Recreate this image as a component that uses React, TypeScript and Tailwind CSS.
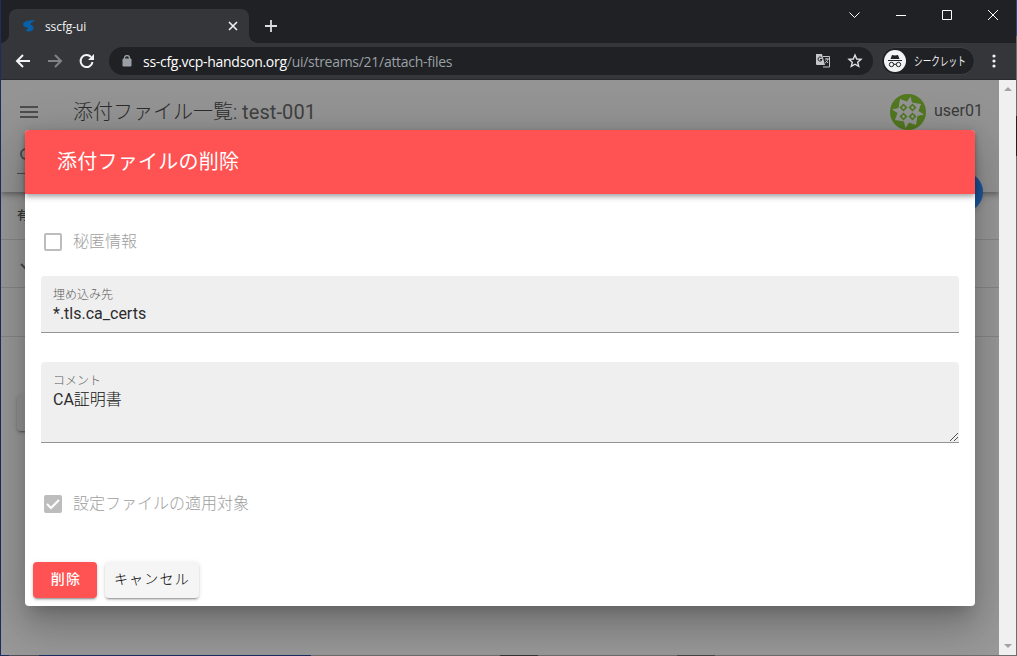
import React from "react";

const Chrome = () => (
  <>
    <div className="flex h-[43px] bg-[#202124] pl-[8px] pt-[9px]">
      <div className="relative flex h-[34px] w-[240px] shrink-0 items-center rounded-t-[8px] bg-[#35363a] pl-[14px] pr-[10px]">
        <span className="absolute -left-[8px] bottom-0 h-2 w-2 bg-[radial-gradient(circle_at_0_0,#202124_7.5px,#35363a_8px)]" />
        <span className="absolute -right-[8px] bottom-0 h-2 w-2 bg-[radial-gradient(circle_at_100%_0,#202124_7.5px,#35363a_8px)]" />
        <svg width="12" height="12" viewBox="0 0 12 12" fill="#0860a8">
          <path d="M12 .5C8-.3 2 .3.3 3.300-.7 6.500 2 7.300 4 7.600 5.500 8 5 9.500 2.500 9.900 5 12.800 10.300 11.500 10.500 8 10.700 5.300 8.300 5.400 7.600 4.500 7 3 9.500 2.200 12 .5Z" />
        </svg>
        <span className="ml-[10px] mt-[2px] flex-1 text-[12px] leading-4 text-[#f1f3f4]"><span className="tracking-[-0.1px]">sscfg-ui</span></span>
        <svg width="12" height="12" viewBox="0 0 12 12" stroke="#f1f3f4" strokeWidth="1.6"><path d="m2 2 8 8M10 2l-8 8" /></svg>
      </div>
      <svg className="ml-[15px] mt-[10px]" width="14" height="14" stroke="#dcdde0" strokeWidth="1.8"><path d="M7 1v12M1 7h12" /></svg>
      <svg className="ml-auto mt-[-2px]" width="167" height="18" fill="none" stroke="#fff" strokeWidth="1">
        <path d="m.5 5.500 5 5 5-5M47 8.500h10M93.500 3.500h9v9h-9zM139 3l10 10M149 3l-10 10" />
      </svg>
    </div>
    <div className="flex h-[37px] items-center border-b border-[#292a2d] bg-[#35363a] pl-[14px] pr-[14px]">
      <svg width="84" height="18" viewBox="0 0 84 18" fill="none" strokeWidth="2">
        <path d="M15 9H2M8 3 2 9l6 6" stroke="#f1f3f4" />
        <path d="M33 9h13M40 3l6 6-6 6" stroke="#818286" />
        <path d="M76 5A6 6 0 1 0 77.500 10" stroke="#f1f3f4" />
        <path d="M79 2v6h-6Z" fill="#f1f3f4" />
      </svg>
      <div className="ml-[10px] flex h-[28px] w-[764px] items-center rounded-full bg-[#202124] pl-[13px] pr-[10px]">
        <svg width="10" height="12" viewBox="0 0 10 12"><path d="M1 4h8v7H1z" fill="#9aa0a6" stroke="#9aa0a6" strokeLinejoin="round" /><path d="M2.500 5V3a2.500 2.500 0 0 1 5 0v2" fill="none" stroke="#9aa0a6" strokeWidth="1.300" /></svg>
        <span className="ml-[11px] mt-[1px] flex-1 whitespace-nowrap text-[14px] leading-5 tracking-[-0.280px] text-[#9aa0a6]"><span className="text-white">ss-cfg.vcp-handson.org</span>/ui/streams/21/attach-files</span>
        <svg width="16" height="16" viewBox="0 0 16 16">
          <path d="M1 1h6l3 11H2a1 1 0 0 1-1-1Z" fill="#c4c6c9" />
          <path d="M8 3.500h6.500v10.500H8M10 6h4M12 5v1M13 6c-.5 2-2 3.500-3 4M10.500 7.500 13 10" fill="none" stroke="#c4c6c9" />
          <path d="M6.500 4.700A2 2 0 1 0 7 6.500H5" fill="none" stroke="#202124" />
        </svg>
        <svg className="ml-[16px]" width="16" height="16" viewBox="0 0 16 16" fill="none" stroke="#dfe1e5" strokeWidth="1.400"><path d="m8 2 1.700 4 4.300.4-3.300 2.800 1 4.200L8 11.200l-3.700 2.200 1-4.200L2 6.400 6.300 6Z" /></svg>
      </div>
      <div className="ml-[8px] flex h-[28px] w-[94px] items-center rounded-full border border-[#3c4043] bg-[#202124] pl-[2px]">
        <svg className="shrink-0" width="22" height="22" viewBox="0 0 22 22"><circle cx="11" cy="11" r="11" fill="#f1f3f4" /><path d="M4 10h14v1H4zM6.500 9l1.500-4 3 .5 3-.5 1.500 4Z" fill="#202124" /><g fill="none" stroke="#202124" strokeWidth="1"><circle cx="7.500" cy="14.500" r="2.200" /><circle cx="14.500" cy="14.500" r="2.200" /><path d="M9.700 14.300h2.600" /></g></svg>
        <span className="ml-[8px] mt-[1px] origin-left scale-x-[.72] whitespace-nowrap text-[12px] text-[#f1f3f4]">シークレット</span>
      </div>
      <svg className="ml-[17px]" width="4" height="14" fill="#f1f3f4"><circle cx="2" cy="2" r="1.600" /><circle cx="2" cy="7" r="1.600" /><circle cx="2" cy="12" r="1.600" /></svg>
    </div>
  </>
);

const Avatar = () => (
  <svg width="36" height="36" viewBox="0 0 36 36">
    <defs><clipPath id="avatar"><circle cx="18" cy="18" r="18" /></clipPath></defs>
    <g clipPath="url(#avatar)">
      <path fill="#527820" d="M0 0h36v36H0z" />
      <path fill="#949494" d="M10 5 17 7.500 20.500 2.500 22 8.500 31 10 28.500 17 34 20.500 27.500 22 26 31 19 28.500 15.500 34 14 27.500 5 26 7.500 19 2 15.500 8.500 14Z" />
      <path fill="#527820" fillRule="evenodd" d="m13.500 9.500 4 4-4 4-4-4zm0 2.300-1.700 1.700 1.700 1.700 1.700-1.700zM22.500 9.500l4 4-4 4-4-4zm0 2.300-1.700 1.700 1.700 1.700 1.700-1.700zM13.500 18.500l4 4-4 4-4-4zm0 2.300-1.700 1.700 1.700 1.700 1.700-1.700zM22.500 18.500l4 4-4 4-4-4zm0 2.300-1.700 1.700 1.700 1.700 1.700-1.700z" />
    </g>
  </svg>
);

const Backdrop = () => (
  <div className="min-w-0 flex-1 bg-[#999]">
    <div className="relative z-10 h-[112px] bg-[#949494] shadow-[0_2px_4px_-1px_rgba(0,0,0,.2),0_4px_5px_rgba(0,0,0,.14),0_1px_10px_rgba(0,0,0,.12)]">
      <div className="flex h-[64px] items-center pl-[19px] pr-[16px] text-[#3a3a3a]">
        <svg width="18" height="12" fill="#4d4d4d"><path d="M0 0h18v2H0zM0 5h18v2H0zM0 10h18v2H0z" /></svg>
        <span className="ml-[35px] flex-1 text-[20px] font-light text-[#2c2c2c]">添付ファイル一覧: <span className="font-normal tracking-[.1px] text-[#404040]">test-001</span></span>
        <Avatar />
        <span className="-mt-[2px] ml-[8px] text-[16px]">user01</span>
      </div>
      <div className="ml-[16px] h-[30px] w-[200px] border-b border-[#505050] pl-[2px] pt-[3px]">
        <svg width="16" height="16" fill="none" stroke="#505050" strokeWidth="2"><circle cx="7" cy="7" r="5" /><path d="m10.500 10.500 5 5" /></svg>
      </div>
      <div className="absolute -bottom-[20px] right-[16px] h-[40px] w-[40px] rounded-full bg-[#1d569b] shadow-md" />
    </div>
    <div className="h-[48px] border-b border-[#878787] pl-[16px] pt-[16px] text-[12px] font-medium leading-4 text-[#383838]">有効</div>
    <div className="h-[48px] border-b border-[#878787] pl-[19px] pt-[21px]"><svg width="12" height="10" fill="none" stroke="#494949" strokeWidth="2"><path d="m1 3 4 4 6-6" /></svg></div>
    <div className="h-[49px] border-b border-[#878787]" />
    <div className="ml-[16px] mt-[58px] h-[36px] w-[90px] rounded bg-[#949494] shadow-[0_3px_1px_-2px_rgba(0,0,0,.2),0_2px_2px_rgba(0,0,0,.14),0_1px_5px_rgba(0,0,0,.12)]" />
  </div>
);

const DeleteDialog = () => (
  <div className="absolute left-[25px] top-[130px] z-20 flex h-[476px] w-[950px] flex-col rounded bg-white shadow-[0_11px_15px_-7px_rgba(0,0,0,.2),0_24px_38px_3px_rgba(0,0,0,.14),0_9px_46px_8px_rgba(0,0,0,.12)]">
    <div className="flex h-[64px] shrink-0 items-center rounded-t bg-[#ff5252] pl-[32px] text-[20px] font-normal tracking-[.250px] text-white shadow-[0_2px_4px_-1px_rgba(0,0,0,.2),0_4px_5px_rgba(0,0,0,.14),0_1px_10px_rgba(0,0,0,.12)]">添付ファイルの削除</div>
    <div className="flex h-[82px] shrink-0 items-center px-[19px] pt-[13px]">
      <div className="h-[18px] w-[18px] rounded-[2px] border-2 border-[#bdbdbd]" />
      <span className="ml-[11px] text-[16px] font-light text-[#9e9e9e]">秘匿情報</span>
    </div>
    <div className="mx-[16px] h-[57px] shrink-0 rounded-t border-b border-[#949494] bg-[#efefef] px-[12px] pt-[11px]">
      <div className="text-[12px] font-light leading-[17px] text-[#5c5c5c]">埋め込み先</div>
      <div className="text-[16px] leading-[20px] text-[#2b2b2b]">*.tls.ca_certs</div>
    </div>
    <div className="relative mx-[16px] mt-[29px] h-[81px] shrink-0 rounded-t border-b border-[#949494] bg-[#efefef] px-[12px] pt-[11px]">
      <div className="text-[12px] font-light leading-[17px] text-[#5c5c5c]">コメント</div>
      <div className="text-[16px] font-light leading-[20px] text-[#111]"><span className="font-normal text-[#2b2b2b]">CA</span>証明書</div>
      <svg className="absolute bottom-0 right-0" width="9" height="9" stroke="#505050"><path d="m0 8 8-8M4 8l4-4" /></svg>
    </div>
    <div className="flex h-[119px] shrink-0 items-center px-[19px] pt-[3px]">
      <div className="flex h-[18px] w-[18px] items-center justify-center rounded-[2px] bg-[#bdbdbd]"><svg width="16" height="14" fill="none" stroke="#fff" strokeWidth="2"><path d="m2 7 4 4 8-8" /></svg></div>
      <span className="ml-[11px] text-[16px] font-light text-[#9e9e9e]">設定ファイルの適用対象</span>
    </div>
    <div className="flex gap-2 px-[8px] text-[14px]">
      <button className="h-[36px] w-[64px] rounded bg-[#ff5252] pb-[2px] pl-[2px] font-medium tracking-[1.250px] text-white shadow-[0_3px_1px_-2px_rgba(0,0,0,.2),0_2px_2px_rgba(0,0,0,.14),0_1px_5px_rgba(0,0,0,.12)]">削除</button>
      <button className="h-[36px] w-[94px] rounded bg-[#f5f5f5] pb-[2px] font-light tracking-[1.250px] text-black shadow-[0_3px_1px_-2px_rgba(0,0,0,.2),0_2px_2px_rgba(0,0,0,.14),0_1px_5px_rgba(0,0,0,.12)]">キャンセル</button>
    </div>
  </div>
);

export default function App() {
  return (
    <div className="relative flex h-[656px] w-[1017px] flex-col overflow-hidden font-['Roboto','Noto_Sans_CJK_JP',sans-serif]">
      <div className="flex h-[655px]">
        <div className="w-px shrink-0 bg-[#1c2e60]" />
        <div className="flex min-w-0 flex-1 flex-col">
          <div className="font-['Open_Sans','Noto_Sans_CJK_JP',sans-serif]"><Chrome /></div>
          <div className="flex min-h-0 flex-1 overflow-hidden">
            <Backdrop />
            <div className="relative z-30 flex w-[17px] flex-col items-center justify-between bg-[#f0f0f0] py-[7px]">
              <svg width="8" height="4" fill="#a3a3a3"><path d="m4 0 4 4H0Z" /></svg>
              <svg width="8" height="4" fill="#a3a3a3"><path d="m0 0 4 4 4-4Z" /></svg>
            </div>
          </div>
        </div>
        <div className="flex w-px shrink-0 flex-col bg-[#6d6d6d]">
          <div className="h-[36px] bg-[#24498f]" />
          <div className="mt-[80px] h-[40px] bg-[#202020]" />
        </div>
      </div>
      <div className="flex h-px shrink-0 bg-[#6d6d6d]">
        <div className="flex w-[311px] bg-[#1c2e60] pl-[9px]"><div className="w-[30px] bg-[#4f5058]" /></div>
        <div className="ml-[189px] w-[38px] bg-[#353535]" />
        <div className="ml-[139px] w-[38px] bg-[#454545]" />
      </div>
      <DeleteDialog />
    </div>
  );
}
